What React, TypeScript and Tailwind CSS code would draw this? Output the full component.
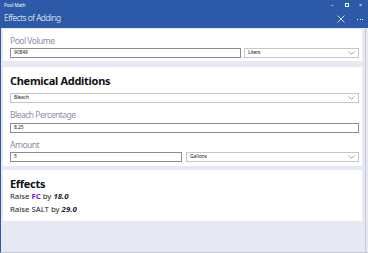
import React from "react";

const Chevron = () => (
  <svg width="7" height="4" viewBox="0 0 7 4" className="shrink-0">
    <path d="M0.5 0.5 L3.5 3.3 L6.5 0.5" fill="none" stroke="#8a8a8a" strokeWidth="0.8" />
  </svg>
);

const Input = ({ value, className = "" }: { value: string; className?: string }) => (
  <div className={`h-[10px] border border-[#8c8c8c] bg-white flex items-center pl-[3px] text-[5px] tracking-[-0.1px] text-[#222] ${className}`}>
    {value}
  </div>
);

const Select = ({ value, className = "" }: { value: string; className?: string }) => (
  <div className={`h-[10px] border border-[#c6c6c6] bg-white flex items-center justify-between pl-[3px] pr-[3px] text-[5px] tracking-[-0.1px] text-[#222] ${className}`}>
    <span>{value}</span>
    <Chevron />
  </div>
);

const Label = ({ children, className = "" }: { children: React.ReactNode; className?: string }) => (
  <div className={`text-[8.5px] leading-[10px] tracking-[-0.5px] text-[#8e8ea8] ${className}`}>{children}</div>
);

export default function App() {
  return (
    <div
      className="w-[368px] h-[253px] bg-[#e6e9f3] flex flex-col border-l border-b border-l-[#2c5aa8] border-b-[#c3c7d3] overflow-hidden"
      style={{ fontFamily: '"Noto Sans", "Open Sans", sans-serif' }}
    >
      <div className="h-[28px] bg-[#2c5aa8] text-white relative shrink-0">
        <div className="absolute left-[3px] top-[2px] text-[4.5px] leading-[6px]">Pool Math</div>
        <div className="absolute left-[3px] top-[12px] text-[8.5px] leading-[12px] tracking-[-0.5px] font-light">Effects of Adding</div>
        <div className="absolute left-[330px] top-[1px] text-[5px] leading-[8px]">–</div>
        <div className="absolute left-[344px] top-[3px] w-[4px] h-[4px] border border-white" />
        <div className="absolute left-[358px] top-[1px] text-[5px] leading-[8px]">×</div>
        <svg className="absolute left-[336px] top-[15px]" width="8" height="8" viewBox="0 0 8 8">
          <path d="M0.5 0.5 L7.5 7.5 M7.5 0.5 L0.5 7.5" stroke="white" strokeWidth="0.8" />
        </svg>
        <div className="absolute left-[356px] top-[15px] flex gap-[1.5px] items-center h-[8px]">
          <span className="w-[1px] h-[1px] bg-white" />
          <span className="w-[1px] h-[1px] bg-white" />
          <span className="w-[1px] h-[1px] bg-white" />
        </div>
      </div>

      <div className="flex-1 flex pl-[2px] pt-[1px]">
        <div className="w-[359px] flex flex-col">
          <div className="bg-white pl-[7px] pr-[3px] pt-[7px] pb-[3px]">
            <Label>Pool Volume</Label>
            <div className="flex gap-[3px] mt-[2px]">
              <Input value="90849" className="w-[231px]" />
              <Select value="Liters" className="flex-1" />
            </div>
          </div>

          <div className="bg-white pl-[7px] pr-[3px] pt-[7px] pb-[4px] mt-[6px]">
            <div className="text-[11px] font-bold text-[#111] leading-[14px] tracking-[-0.3px]">Chemical Additions</div>
            <Select value="Bleach" className="mt-[5px]" />
            <Label className="mt-[7px]">Bleach Percentage</Label>
            <Input value="8.25" className="mt-[3px]" />
            <Label className="mt-[7px]">Amount</Label>
            <div className="flex gap-[4px] mt-[2px]">
              <Input value="5" className="w-[172px]" />
              <Select value="Gallons" className="flex-1" />
            </div>
          </div>

          <div className="bg-white pl-[7px] pr-[3px] pt-[8px] pb-[6px] mt-[4px]">
            <div className="text-[11px] font-bold text-[#111] leading-[12px] tracking-[-0.3px]">Effects</div>
            <div className="text-[7.8px] text-[#222] leading-[12px]">
              Raise <span className="font-bold text-[#6b1fd6]">FC</span> by <span className="font-bold italic">18.0</span>
            </div>
            <div className="text-[7.8px] text-[#222] leading-[12px] mt-[1px]">
              Raise SALT by <span className="font-bold italic">29.0</span>
            </div>
          </div>
        </div>
        <div className="w-[1px] bg-[#c4c7cf] ml-[3px]" />
      </div>
    </div>
  );
}
